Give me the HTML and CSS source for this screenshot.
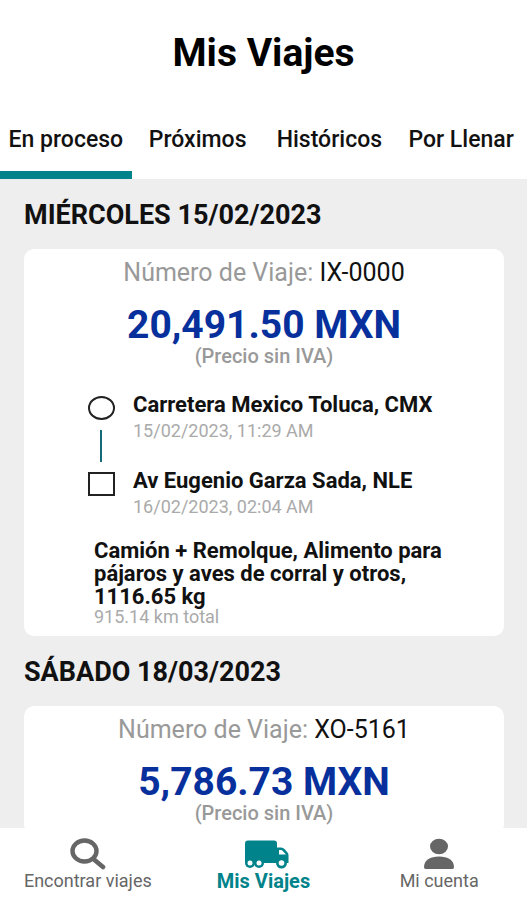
FILE: index.html
```
<!DOCTYPE html>
<html lang="es">
<head>
    <meta charset="UTF-8">
    <meta name="viewport" content="width=device-width, initial-scale=1.0">
    <title>Mis Viajes</title>
    <link rel="stylesheet" href="styles.css">
</head>
<body>
    <header class="header">
        <h1 class="title">Mis Viajes</h1>
        <div class="tabs">
            <button class="tab active" type="button">En proceso</button>
            <button class="tab" type="button">Próximos</button>
            <button class="tab" type="button">Históricos</button>
            <button class="tab" type="button">Por Llenar</button>
        </div>
    </header>

    <main class="trips">
        <h2 class="day">MIÉRCOLES 15/02/2023</h2>
        <article class="card">
            <p class="trip-number">Número de Viaje: <span>IX-0000</span></p>
            <p class="price">20,491.50 MXN</p>
            <p class="tax">(Precio sin IVA)</p>

            <ul class="route">
                <li class="stop origin">
                    <span class="marker circle"></span>
                    <div>
                        <p class="place">Carretera Mexico Toluca, CMX</p>
                        <p class="time">15/02/2023, 11:29 AM</p>
                    </div>
                </li>
                <li class="stop">
                    <span class="marker"></span>
                    <div>
                        <p class="place">Av Eugenio Garza Sada, NLE</p>
                        <p class="time">16/02/2023, 02:04 AM</p>
                    </div>
                </li>
            </ul>

            <div class="cargo">
                <p class="cargo-text">Camión + Remolque, Alimento para pájaros y aves de corral y otros, 1116.65 kg</p>
                <p class="distance">915.14 km total</p>
            </div>
        </article>

        <h2 class="day">SÁBADO 18/03/2023</h2>
        <article class="card">
            <p class="trip-number">Número de Viaje: <span>XO-5161</span></p>
            <p class="price">5,786.73 MXN</p>
            <p class="tax">(Precio sin IVA)</p>
        </article>
    </main>

    <nav class="bottom-nav">
        <a class="nav-item" href="#encontrar">
            <svg class="icon" width="36" height="32" viewBox="0 0 36 32" aria-hidden="true">
                <ellipse cx="14.5" cy="13" rx="12" ry="10.5" fill="none" stroke="currentColor" stroke-width="4.4"/>
                <path d="M24 21.5L33 29" stroke="currentColor" stroke-width="4.6" stroke-linecap="round"/>
            </svg>
            <span>Encontrar viajes</span>
        </a>
        <a class="nav-item active" href="#viajes">
            <svg class="icon" width="54" height="32" viewBox="-8 0 54 32" aria-hidden="true">
                <path fill="currentColor" fill-rule="evenodd" d="M4 2.5H30Q33 2.5 33 5.5V9.5H37Q39 9.5 40.5 11L43.500 14.500Q44.500 15.500 44.500 17V25H1V5.500Q1 2.500 4 2.500ZM35 12V16.500H42L38.500 12.700Q38 12 37 12Z"/>
                <circle cx="6" cy="25" r="5" fill="currentColor"/>
                <circle cx="15" cy="25" r="5" fill="currentColor"/>
                <circle cx="37.5" cy="25" r="5.5" fill="currentColor"/>
                <circle cx="6" cy="25" r="2.5" fill="#fff"/>
                <circle cx="15" cy="25" r="2.5" fill="#fff"/>
                <circle cx="37.5" cy="25" r="2.8" fill="#fff"/>
            </svg>
            <span>Mis Viajes</span>
        </a>
        <a class="nav-item" href="#cuenta">
            <svg class="icon" width="32" height="32" viewBox="0 0 32 32" aria-hidden="true">
                <ellipse cx="16" cy="8.5" rx="9" ry="7.8" fill="currentColor"/>
                <path fill="currentColor" d="M2.5 31Q1 31 1 29C1 22.500 7 18.500 16 18.500S31 22.500 31 29Q31 31 29.500 31Z"/>
            </svg>
            <span>Mi cuenta</span>
        </a>
    </nav>
</body>
</html>
```
FILE: styles.css
```
* { margin: 0; padding: 0; box-sizing: border-box; }

body {
    font-family: Roboto, "Liberation Sans", sans-serif;
    background: #eeeeee;
    color: #111;
    height: 100vh;
    display: flex;
    flex-direction: column;
}

.header {
    background: #fff;
    text-align: center;
}

.title {
    font-size: 39px;
    line-height: 44px;
    font-weight: 700;
    color: #000;
    padding: 31px 0 25px;
}

.tabs {
    display: grid;
    grid-template-columns: repeat(4, 1fr);
}

.tab {
    font-family: inherit;
    font-size: 23px;
    line-height: 24px;
    font-weight: 500;
    color: #111;
    background: none;
    border: none;
    border-bottom: 8px solid transparent;
    padding: 28px 0 19px;
    white-space: nowrap;
    cursor: pointer;
}

.tab.active {
    border-bottom-color: #00838a;
}

.trips {
    flex: 1;
    min-height: 0;
    overflow-y: auto;
    scrollbar-width: none;
    padding: 0 23px 0 24px;
}

.day {
    font-size: 27px;
    line-height: 32px;
    font-weight: 700;
    padding: 20px 0 18px;
}

.card {
    background: #fff;
    border-radius: 10px;
    padding: 8px 0 10px;
}

.trip-number {
    font-size: 25px;
    line-height: 32px;
    text-align: center;
    color: #999;
}

.trip-number span {
    color: #111;
}

.price {
    font-size: 39px;
    line-height: 40px;
    font-weight: 700;
    text-align: center;
    color: #07309c;
    margin-top: 16px;
}

.tax {
    font-size: 20px;
    line-height: 22px;
    font-weight: 500;
    text-align: center;
    color: #999;
}

.route {
    list-style: none;
    padding: 26px 0 0 64px;
}

.stop {
    display: flex;
    gap: 18px;
    min-height: 76px;
    position: relative;
}

.stop:last-child {
    min-height: 70px;
}

.marker {
    flex: none;
    width: 27px;
    height: 24px;
    border: 2px solid #222;
    margin-top: 3px;
}

.marker.circle {
    border-radius: 50%;
}

/* line that joins both stops */
.origin::after {
    content: "";
    position: absolute;
    left: 12px;
    top: 37px;
    width: 2px;
    height: 32px;
    background: #146a78;
}

.place {
    font-size: 22px;
    line-height: 24px;
    font-weight: 700;
}

.time {
    font-size: 18px;
    line-height: 28px;
    color: #aaa;
}

.cargo {
    padding: 0 56px 0 70px;
}

.cargo-text {
    font-size: 22px;
    line-height: 23px;
    font-weight: 700;
}

.distance {
    font-size: 18px;
    line-height: 18px;
    color: #aaa;
}

.bottom-nav {
    background: #fff;
    display: grid;
    grid-template-columns: repeat(3, 1fr);
    padding: 10px 0 8px;
}

.nav-item {
    display: flex;
    flex-direction: column;
    align-items: center;
    font-size: 18px;
    line-height: 22px;
    color: #666;
    text-decoration: none;
}

.nav-item.active {
    font-size: 20px;
    font-weight: 700;
    color: #00838a;
}

.icon {
    display: block;
}
```
